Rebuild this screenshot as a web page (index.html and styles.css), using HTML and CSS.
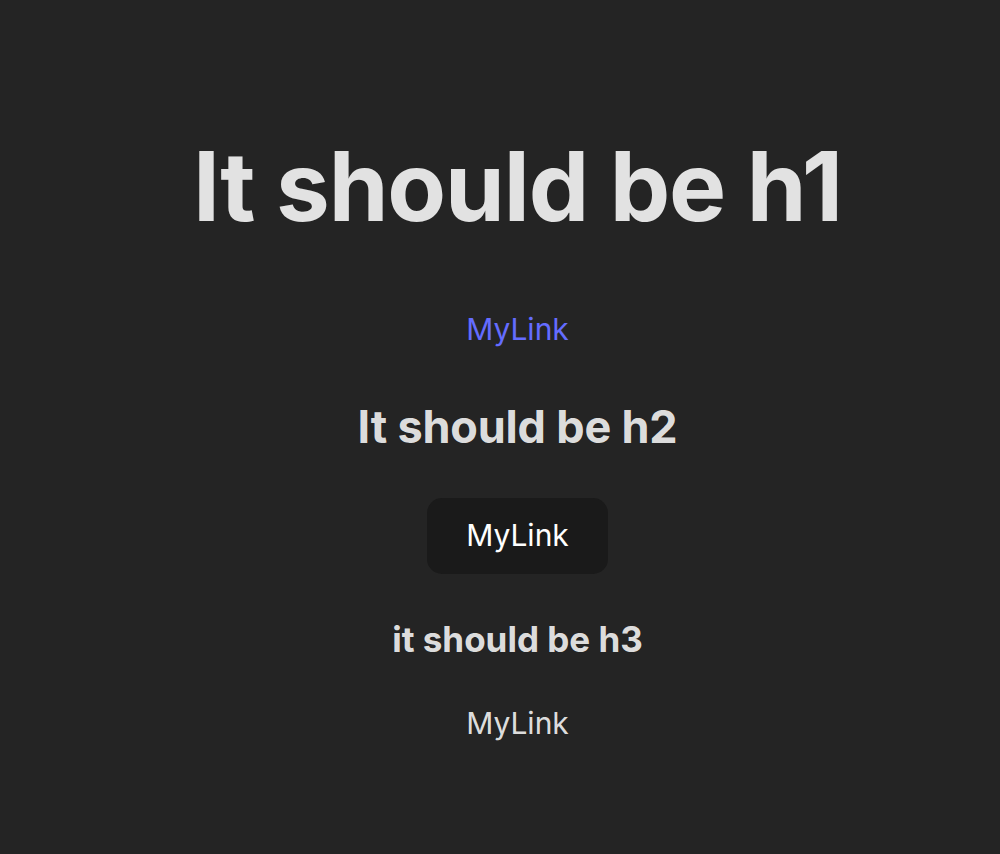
FILE: index.html
```html
<!DOCTYPE html>
<html lang="en">
<head>
<meta charset="UTF-8">
<title>Headings</title>
<link rel="stylesheet" href="styles.css">
</head>
<body>
  <main class="app">
    <h1 class="title">It should be h1</h1>
    <a class="link link-accent" href="#">MyLink</a>
    <h2 class="subtitle">It should be h2</h2>
    <a class="link link-button" href="#">MyLink</a>
    <h3 class="minor">it should be h3</h3>
    <a class="link link-plain" href="#">MyLink</a>
  </main>
</body>
</html>
```

FILE: styles.css
```css
html, body {
  margin: 0;
  padding: 0;
}

body {
  background: #242424;
  color: rgba(255, 255, 255, 0.87);
  font-family: Inter, "Noto Sans", sans-serif;
  font-size: 30px;
  line-height: 1.5;
  -webkit-font-smoothing: antialiased;
}

.app {
  display: flex;
  flex-direction: column;
  align-items: center;
  text-align: center;
  padding: 134px 0 0 35px;
}

.title {
  margin: 0;
  font-size: 96px;
  line-height: 1.1;
  font-weight: 700;
  letter-spacing: -0.0115em;
}

.subtitle {
  margin: 48px 0 0;
  font-size: 45px;
  line-height: 1.2;
  font-weight: 700;
  letter-spacing: -0.004em;
}

.minor {
  margin: 44px 0 0;
  font-size: 35px;
  line-height: 1.2;
  font-weight: 700;
}

.link {
  display: block;
  text-decoration: none;
  font-weight: 400;
}

.link-accent {
  margin-top: 67px;
  color: #646cff;
}

.link-button {
  margin-top: 44px;
  height: 76px;
  box-sizing: border-box;
  padding: 15px 39px;
  border-radius: 15px;
  background: #1a1a1a;
  color: #ffffff;
}

.link-plain {
  margin-top: 41px;
  color: rgba(255, 255, 255, 0.87);
}
```
